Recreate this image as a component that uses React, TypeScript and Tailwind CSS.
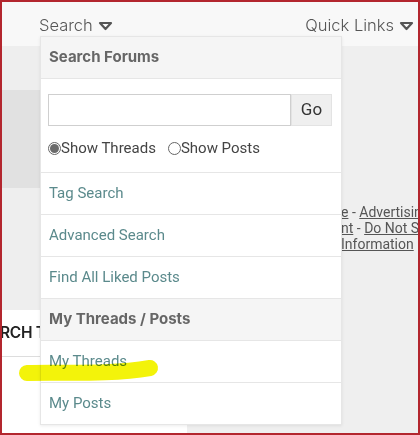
import React from 'react';

function Caret() {
  return (
    <svg width="15" height="10" viewBox="0 0 15 10" className="ml-[5px] mt-[2px]">
      <path d="M2 2 H13 L7.5 8 Z" fill="none" stroke="currentColor" strokeWidth="2.2" strokeLinejoin="round" />
    </svg>
  );
}

function Radio({ checked }: { checked?: boolean }) {
  return (
    <span className="w-[13px] h-[13px] rounded-full border border-[#666] bg-white flex items-center justify-center">
      {checked && <span className="w-[9px] h-[9px] rounded-full bg-[#6b6b6b]" />}
    </span>
  );
}

const items = ['Tag Search', 'Advanced Search', 'Find All Liked Posts'];

export default function App() {
  const poppins = { fontFamily: 'Inter, "Open Sans", sans-serif' };
  const roboto = { fontFamily: 'Roboto, "Liberation Sans", sans-serif' };

  return (
    <div className="w-[420px] h-[435px] border-2 border-[#b3262e] relative overflow-hidden bg-[#efefef]">
      {/* top nav */}
      <header className="h-[44px] bg-[#f8f8f8] flex items-center justify-between pl-[37px] pr-[4px] pt-[2px] text-[#555] text-[16.5px] font-light" style={poppins}>
        <div className="flex items-center">
          Search
          <Caret />
        </div>
        <div className="flex items-center">
          Quick Links
          <Caret />
        </div>
      </header>

      <div className="flex h-[387px]">
        <div className="w-[185px] flex flex-col">
          <div className="h-[44px] bg-[#eeeeee]" />
          <div className="h-[98px] bg-[#e1e1e1]" />
          <div className="h-[122px] bg-[#eeeeee]" />
          <div className="h-[47px] bg-white border-b border-[#dddddd] flex items-center">
            <div className="w-[38px] overflow-hidden">
              <span className="block -ml-[2px] font-semibold text-[15.5px] tracking-[-0.3px] text-[#222] whitespace-nowrap" style={poppins}>RCH T</span>
            </div>
          </div>
          <div className="flex-1 bg-white" />
        </div>
        <div className="flex-1 bg-[#efefef] pt-[158px] overflow-hidden">
          <div className="ml-[154px] text-[14px] leading-[16px] text-[#555] whitespace-nowrap" style={roboto}>
            <div><span className="underline">e</span> - <span className="underline">Advertising</span></div>
            <div><span className="underline">nt</span> - <span className="underline">Do Not Se</span></div>
            <div><span className="underline">Information</span></div>
          </div>
        </div>
      </div>

      {/* dropdown menu */}
      <div className="absolute left-[38px] top-[34px] w-[302px] bg-white border border-[#e6e6e6] shadow-[0_1px_3px_rgba(0,0,0,0.08)]">
        <div className="h-[42px] bg-[#f5f5f5] border-b border-[#e6e6e6] flex items-center px-[8px] text-[15px] font-bold text-[#666]" style={poppins}>
          Search Forums
        </div>
        <div className="px-[7px] pt-[15px] h-[94px] border-b border-[#e6e6e6]" style={roboto}>
          <div className="flex">
            <div className="w-[243px] h-[32px] border border-[#cfcfcf] bg-white" />
            <div className="w-[41px] h-[32px] bg-[#efefef] border border-[#e3e3e3] flex items-center justify-center text-[17px] text-[#333]">Go</div>
          </div>
          <div className="flex items-center mt-[11px] text-[15px] text-[#444]">
            <Radio checked />
            <span>Show Threads</span>
            <span className="ml-[12px]"><Radio /></span>
            <span>Show Posts</span>
          </div>
        </div>
        {items.map((t) => (
          <div key={t} className="h-[42px] border-b border-[#e6e6e6] flex items-center px-[8px] text-[15px] text-[#5b8a8c]" style={roboto}>
            {t}
          </div>
        ))}
        <div className="h-[42px] bg-[#f5f5f5] border-b border-[#e6e6e6] flex items-center px-[8px] text-[15px] font-bold text-[#666]" style={poppins}>
          My Threads / Posts
        </div>
        <div className="h-[42px] border-b border-[#e6e6e6] flex items-center px-[8px] text-[15px] text-[#5b8a8c]" style={roboto}>
          My Threads
        </div>
        <div className="h-[41px] flex items-center px-[8px] text-[15px] text-[#5b8a8c]" style={roboto}>
          My Posts
        </div>
      </div>

      {/* highlighter mark */}
      <svg className="absolute left-0 top-0 pointer-events-none mix-blend-multiply" width="420" height="435">
        <path d="M25 371 C 60 370, 108 373, 148 366" fill="none" stroke="#f3f30a" strokeWidth="16" strokeLinecap="round" />
      </svg>
    </div>
  );
}
